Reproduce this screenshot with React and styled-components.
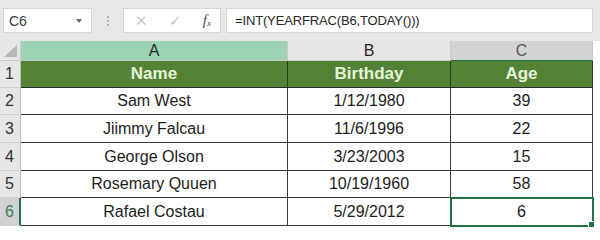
import React from "react";
import styled, { createGlobalStyle } from "styled-components";

const GlobalStyle = createGlobalStyle`
  body {
    margin: 0;
    background: #fff;
    font-family: "Liberation Sans", Arial, sans-serif;
  }
`;

const rows = [
  { name: "Sam West", birthday: "1/12/1980", age: 39 },
  { name: "Jiimmy Falcau", birthday: "11/6/1996", age: 22 },
  { name: "George Olson", birthday: "3/23/2003", age: 15 },
  { name: "Rosemary Quuen", birthday: "10/19/1960", age: 58 },
  { name: "Rafael Costau", birthday: "5/29/2012", age: 6 },
];

const App = () => {
  return (
    <Page>
      <GlobalStyle />
      <Toolbar>
        <NameBox>
          <span>C6</span>
          <Caret />
        </NameBox>
        <Grip>
          <i />
          <i />
          <i />
        </Grip>
        <FuncBox>
          <FuncIcon>✕</FuncIcon>
          <FuncIcon>✓</FuncIcon>
          <FxIcon>
            f<sub>x</sub>
          </FxIcon>
        </FuncBox>
        <FormulaBar>=INT(YEARFRAC(B6,TODAY()))</FormulaBar>
      </Toolbar>
      <Sheet>
        <Corner>
          <CornerMark />
        </Corner>
        <ColHeader $tone="green">A</ColHeader>
        <ColHeader>B</ColHeader>
        <ColHeader $tone="active">C</ColHeader>

        <RowNum>1</RowNum>
        <HeadCell>Name</HeadCell>
        <HeadCell>Birthday</HeadCell>
        <HeadCell>Age</HeadCell>

        {rows.map((row, i) => {
          const last = i === rows.length - 1;
          return (
            <React.Fragment key={row.name}>
              <RowNum $active={last}>{i + 2}</RowNum>
              <DataCell>{row.name}</DataCell>
              <DataCell>{row.birthday}</DataCell>
              <DataCell $selected={last}>{row.age}</DataCell>
            </React.Fragment>
          );
        })}
      </Sheet>
    </Page>
  );
};

const Page = styled.div`
  width: 600px;
  height: 232px;
  overflow: hidden;
  background: #fff;
`;

const Toolbar = styled.div`
  display: flex;
  align-items: center;
  height: 41px;
  padding: 0 7px 0 3px;
  box-sizing: border-box;
  background: #e7e7e7;
`;

const NameBox = styled.div`
  width: 89px;
  height: 25px;
  box-sizing: border-box;
  display: flex;
  align-items: center;
  justify-content: space-between;
  padding: 0 9px 0 5px;
  background: #fff;
  border: 1px solid #d6d6d6;
  font-size: 14px;
  color: #3a3a3a;
`;

const Caret = styled.span`
  width: 0;
  height: 0;
  border-left: 3px solid transparent;
  border-right: 3px solid transparent;
  border-top: 4px solid #6a6a6a;
`;

const Grip = styled.div`
  display: flex;
  flex-direction: column;
  gap: 2px;
  margin: 0 14px 0 15px;

  i {
    display: block;
    width: 2px;
    height: 2px;
    background: #b4b4b4;
  }
`;

const FuncBox = styled.div`
  width: 98px;
  height: 25px;
  box-sizing: border-box;
  display: flex;
  align-items: center;
  justify-content: space-between;
  padding: 0 9px 0 11px;
  background: #fff;
  border: 1px solid #d6d6d6;
`;

const FuncIcon = styled.span`
  font-size: 15px;
  color: #c8c8c8;
`;

const FxIcon = styled.span`
  font-family: "Liberation Serif", "Times New Roman", serif;
  font-style: italic;
  font-size: 15px;
  color: #4a4a4a;

  sub {
    font-size: 9px;
    vertical-align: -1px;
  }
`;

const FormulaBar = styled.div`
  flex: 1;
  height: 25px;
  box-sizing: border-box;
  display: flex;
  align-items: center;
  margin-left: 5px;
  padding-left: 8px;
  background: #fff;
  border: 1px solid #d6d6d6;
  font-size: 13px;
  color: #262626;
  letter-spacing: -0.15px;
`;

const Sheet = styled.div`
  display: grid;
  grid-template-columns: 21px 267px 163px 142px;
  grid-template-rows: 20px 27px 27px 28px 28px 27px 28px;
  width: 593px;
`;

const Corner = styled.div`
  position: relative;
  background: #e6e6e6;
  border-right: 1px solid #cdcdcd;
  border-bottom: 1px solid #cdcdcd;
`;

const CornerMark = styled.span`
  position: absolute;
  right: 3px;
  bottom: 3px;
  width: 0;
  height: 0;
  border-left: 13px solid transparent;
  border-bottom: 12px solid #b8b8b8;
`;

const headerTones = {
  green: "#9dd3b4",
  active: "#d3d3d3",
  plain: "#e6e6e6",
};

const ColHeader = styled.div`
  display: flex;
  align-items: center;
  justify-content: center;
  box-sizing: border-box;
  background: ${(p) => headerTones[p.$tone || "plain"]};
  border-right: 1px solid #c9c9c9;
  border-bottom: 1px solid ${(p) => (p.$tone === "active" ? "#217346" : "#c9c9c9")};
  font-size: 16px;
  color: ${(p) => (p.$tone === "active" ? "#4d5d55" : "#262626")};
`;

const RowNum = styled.div`
  display: flex;
  align-items: center;
  padding-left: 5px;
  box-sizing: border-box;
  background: ${(p) => (p.$active ? "#d2d2d2" : "#e6e6e6")};
  border-bottom: 1px solid #d0d0d0;
  border-right: ${(p) => (p.$active ? "2px solid #217346" : "1px solid #bdbdbd")};
  font-size: 16px;
  color: ${(p) => (p.$active ? "#3f7f5a" : "#333")};
`;

const HeadCell = styled.div`
  display: flex;
  align-items: center;
  justify-content: center;
  box-sizing: border-box;
  background: #548235;
  border-right: 1px solid #2c3b22;
  border-bottom: 1px solid #2a2a2a;
  font-size: 17px;
  font-weight: bold;
  color: #e6f3dc;
`;

const DataCell = styled.div`
  position: relative;
  display: flex;
  align-items: center;
  justify-content: center;
  box-sizing: border-box;
  background: #fff;
  border-right: 1px solid #3a3a3a;
  border-bottom: 1px solid #3a3a3a;
  font-size: 16px;
  color: #1c1c1c;
  outline: ${(p) => (p.$selected ? "2px solid #217346" : "none")};
  outline-offset: -1px;

  &::after {
    content: "";
    display: ${(p) => (p.$selected ? "block" : "none")};
    position: absolute;
    right: -3px;
    bottom: -3px;
    width: 5px;
    height: 5px;
    background: #217346;
    border: 1px solid #fff;
  }
`;

export default App;
